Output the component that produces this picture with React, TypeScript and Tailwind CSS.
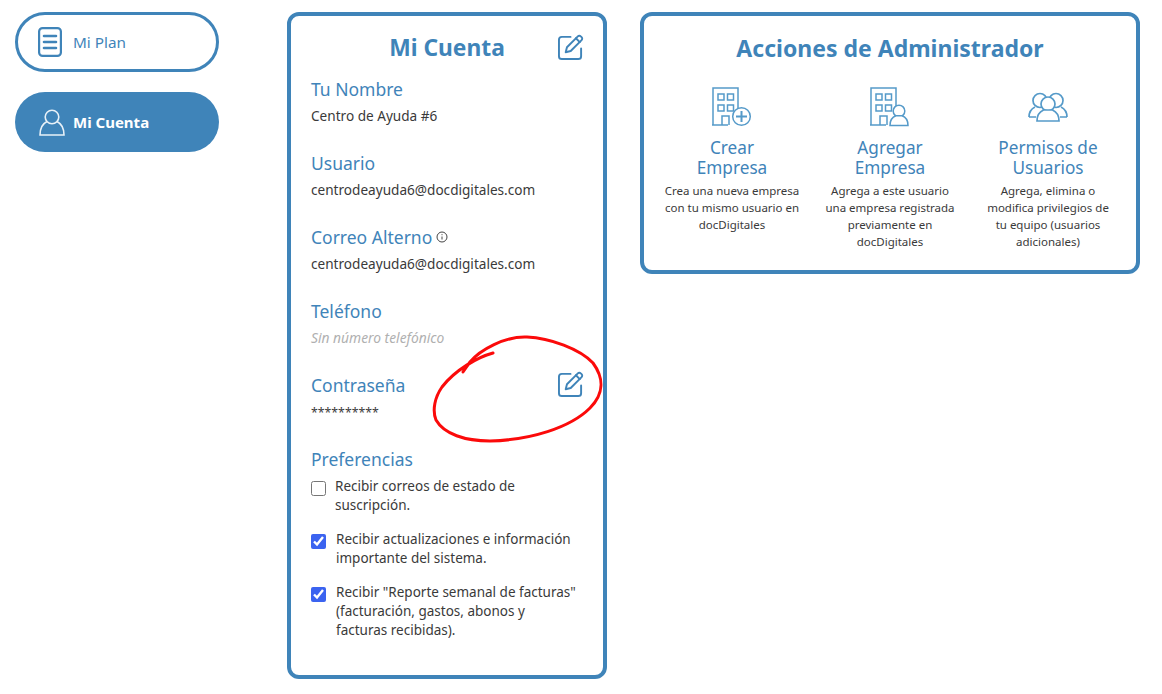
import React from "react";

const font = "font-['Noto_Sans','Open_Sans',sans-serif]";

function EditIcon() {
  return (
    <svg width="26" height="26" viewBox="0 0 27 27" fill="none" stroke="#3f84b9" strokeWidth="2" strokeLinecap="round" strokeLinejoin="round">
      <path d="M13 3H4a3 3 0 0 0-3 3v17a3 3 0 0 0 3 3h17a3 3 0 0 0 3-3V15" />
      <path d="M8 19l1.3-5.2L20.6 2.4a2.1 2.1 0 0 1 3 0l.9.9a2.1 2.1 0 0 1 0 3L13.2 17.7z" />
      <path d="M18.6 4.4l4 4" />
    </svg>
  );
}

function PlanIcon() {
  return (
    <svg width="24" height="30" viewBox="0 0 24 30" fill="none" stroke="#3f84b9" strokeWidth="2.2" strokeLinecap="round">
      <rect x="1.1" y="1.1" width="21.8" height="27.8" rx="3.5" />
      <path d="M6 9h12M6 15h12M6 21h12" strokeWidth="2.6" />
    </svg>
  );
}

function UserIcon() {
  return (
    <svg width="26" height="27" viewBox="0 0 26 27" fill="none" stroke="#e8f1f8" strokeWidth="1.6">
      <circle cx="13" cy="8" r="6.8" />
      <path d="M8 12.5C4 14.5 1 18.500 1 26h24c0-7.500-3-11.500-7-13.500" />
    </svg>
  );
}

function Building() {
  return (
    <g>
      <path d="M1 38V1h25v24" />
      <path d="M0 38h16" />
      <rect x="6" y="7" width="6" height="6" />
      <rect x="15.500" y="7" width="6" height="6" />
      <rect x="6" y="18" width="6" height="6" />
      <rect x="15.500" y="18" width="6" height="6" />
      <path d="M10 38v-9h7v9" />
    </g>
  );
}

function CreateIcon() {
  return (
    <svg width="40" height="40" viewBox="0 0 40 40" fill="none" stroke="#559ac9" strokeWidth="1.5">
      <Building />
      <circle cx="29.500" cy="29.500" r="8.800" fill="white" />
      <path d="M29.500 24v11M24 29.500h11" strokeWidth="2" />
    </svg>
  );
}

function AddIcon() {
  return (
    <svg width="40" height="40" viewBox="0 0 40 40" fill="none" stroke="#559ac9" strokeWidth="1.5">
      <Building />
      <circle cx="29" cy="24" r="5.800" fill="white" />
      <path d="M20 38.500c0-6 3-8.800 6-9.800h6c3 1 6 3.800 6 9.800z" fill="white" />
    </svg>
  );
}

function TeamIcon() {
  return (
    <svg width="40" height="30" viewBox="0 0 40 30" fill="none" stroke="#559ac9" strokeWidth="1.7" className="mb-[5px]">
      <circle cx="12" cy="8.500" r="7" />
      <circle cx="28" cy="8.500" r="7" />
      <path d="M1 25c0-5 2-8 6-10M39 25c0-5-2-8-6-10M1 25h7M39 25h-7" />
      <circle cx="20" cy="12" r="7" fill="white" />
      <path d="M9 29c0-6 2-9 6.500-11h9c4.500 2 6.500 5 6.500 11z" fill="white" />
    </svg>
  );
}

function Field({ label, children, action }: { label: React.ReactNode; children: React.ReactNode; action?: React.ReactNode }) {
  return (
    <div className="relative h-[74px]">
      <div className="text-[17.5px] leading-[24px] text-[#3f84b9]">{label}</div>
      <div className="mt-[4px] text-[13.6px] leading-[22px] text-[#3a3a3a]">{children}</div>
      {action && <div className="absolute right-[-1px] top-[-2px]">{action}</div>}
    </div>
  );
}

function Pref({ checked, gap, children }: { checked: boolean; gap: string; children: React.ReactNode }) {
  return (
    <label className={`flex items-start ${gap}`}>
      <input type="checkbox" defaultChecked={checked} className="mt-[4px] h-[15px] w-[15px] shrink-0 accent-[#3b63f0]" />
      <span className="text-[13.500px] leading-[19px] text-[#3a3a3a]">{children}</span>
    </label>
  );
}

function Action({ icon, title, children }: { icon: React.ReactNode; title: React.ReactNode; children: React.ReactNode }) {
  return (
    <div className="flex w-[140px] flex-col items-center text-center">
      <div className="flex h-[40px] items-end justify-center">{icon}</div>
      <div className="mt-[11px] text-[17.2px] leading-[20px] text-[#3f84b9]">{title}</div>
      <div className="mt-[4px] w-[135px] text-[11.5px] leading-[17px] text-[#3a3a3a]">{children}</div>
    </div>
  );
}

export default function App() {
  return (
    <div className={`${font} flex h-[694px] w-[1162px] items-start overflow-hidden bg-white pt-3`}>
      <div className="ml-[15px] flex w-[204px] flex-col gap-5">
        <div className="flex h-[60px] items-center gap-[11px] rounded-full border-[3px] border-[#3f84b9] pl-5 text-[#3f84b9]">
          <PlanIcon />
          <span className="text-[15.3px]">Mi Plan</span>
        </div>
        <div className="flex h-[60px] items-center gap-[8px] rounded-full bg-[#3f84b9] pl-6 text-white">
          <UserIcon />
          <span className="text-[15px] font-bold">Mi Cuenta</span>
        </div>
      </div>

      <div className="relative ml-[68px] h-[667px] w-[320px] rounded-xl border-4 border-[#3f84b9] px-5 pt-[14px]">
        <div className="relative mb-[11px] h-[36px] text-center text-[22.8px] font-bold leading-[36px] text-[#3f84b9]">
          Mi Cuenta
          <div className="absolute right-[-1px] top-[4px]"><EditIcon /></div>
        </div>
        <Field label="Tu Nombre">Centro de Ayuda #6</Field>
        <Field label="Usuario">centrodeayuda6@docdigitales.com</Field>
        <Field
          label={
            <span className="inline-flex items-center gap-[4px]">
              Correo Alterno
              <svg width="12" height="12" viewBox="0 0 12 12" fill="none" stroke="#444" strokeWidth="1"><circle cx="6" cy="6" r="5" /><path d="M6 5.500v3M6 3.200v1" /></svg>
            </span>
          }
        >
          centrodeayuda6@docdigitales.com
        </Field>
        <Field label="Teléfono"><span className="text-[13.8px] italic text-[#b0b0b0]">Sin número telefónico</span></Field>
        <Field label="Contraseña" action={<EditIcon />}><span className="text-[12.3px]">**********</span></Field>
        <div className="text-[17.5px] leading-[24px] text-[#3f84b9]">Preferencias</div>
        <div className="mt-[6px] flex flex-col gap-[15px]">
          <Pref checked={false} gap="gap-[9px]">Recibir correos de estado de suscripción.</Pref>
          <Pref checked gap="gap-[10px]">Recibir actualizaciones e información importante del sistema.</Pref>
          <Pref checked gap="gap-[10px]">Recibir "Reporte semanal de facturas" (facturación, gastos, abonos y<br />facturas recibidas).</Pref>
        </div>
      </div>

      <div className="ml-[33px] h-[262px] w-[500px] rounded-xl border-4 border-[#3f84b9] px-[18px] pt-[14px]">
        <div className="text-center text-[23px] font-bold leading-[36px] text-[#3f84b9]">Acciones de Administrador</div>
        <div className="mt-[21px] flex justify-between">
          <Action icon={<CreateIcon />} title={<>Crear<br />Empresa</>}>Crea una nueva empresa con tu mismo usuario en docDigitales</Action>
          <Action icon={<AddIcon />} title={<>Agregar<br />Empresa</>}>Agrega a este usuario una empresa registrada previamente en docDigitales</Action>
          <Action icon={<TeamIcon />} title={<>Permisos de<br />Usuarios</>}>Agrega, elimina o modifica privilegios de tu equipo (usuarios adicionales)</Action>
        </div>
      </div>

      <svg className="pointer-events-none absolute left-0 top-0" width="1162" height="694" fill="none" stroke="#fb0a0a" strokeWidth="3" strokeLinecap="round">
        <path d="M493 353C478 357 455 370 442 387C435 397 432 410 436 420C444 434 465 441 490 441C530 440 570 428 590 408C604 394 604 378 593 363C580 349 550 338 527 337C505 336 480 350 470 362C467 366 465 369 463 372" />
      </svg>
    </div>
  );
}
